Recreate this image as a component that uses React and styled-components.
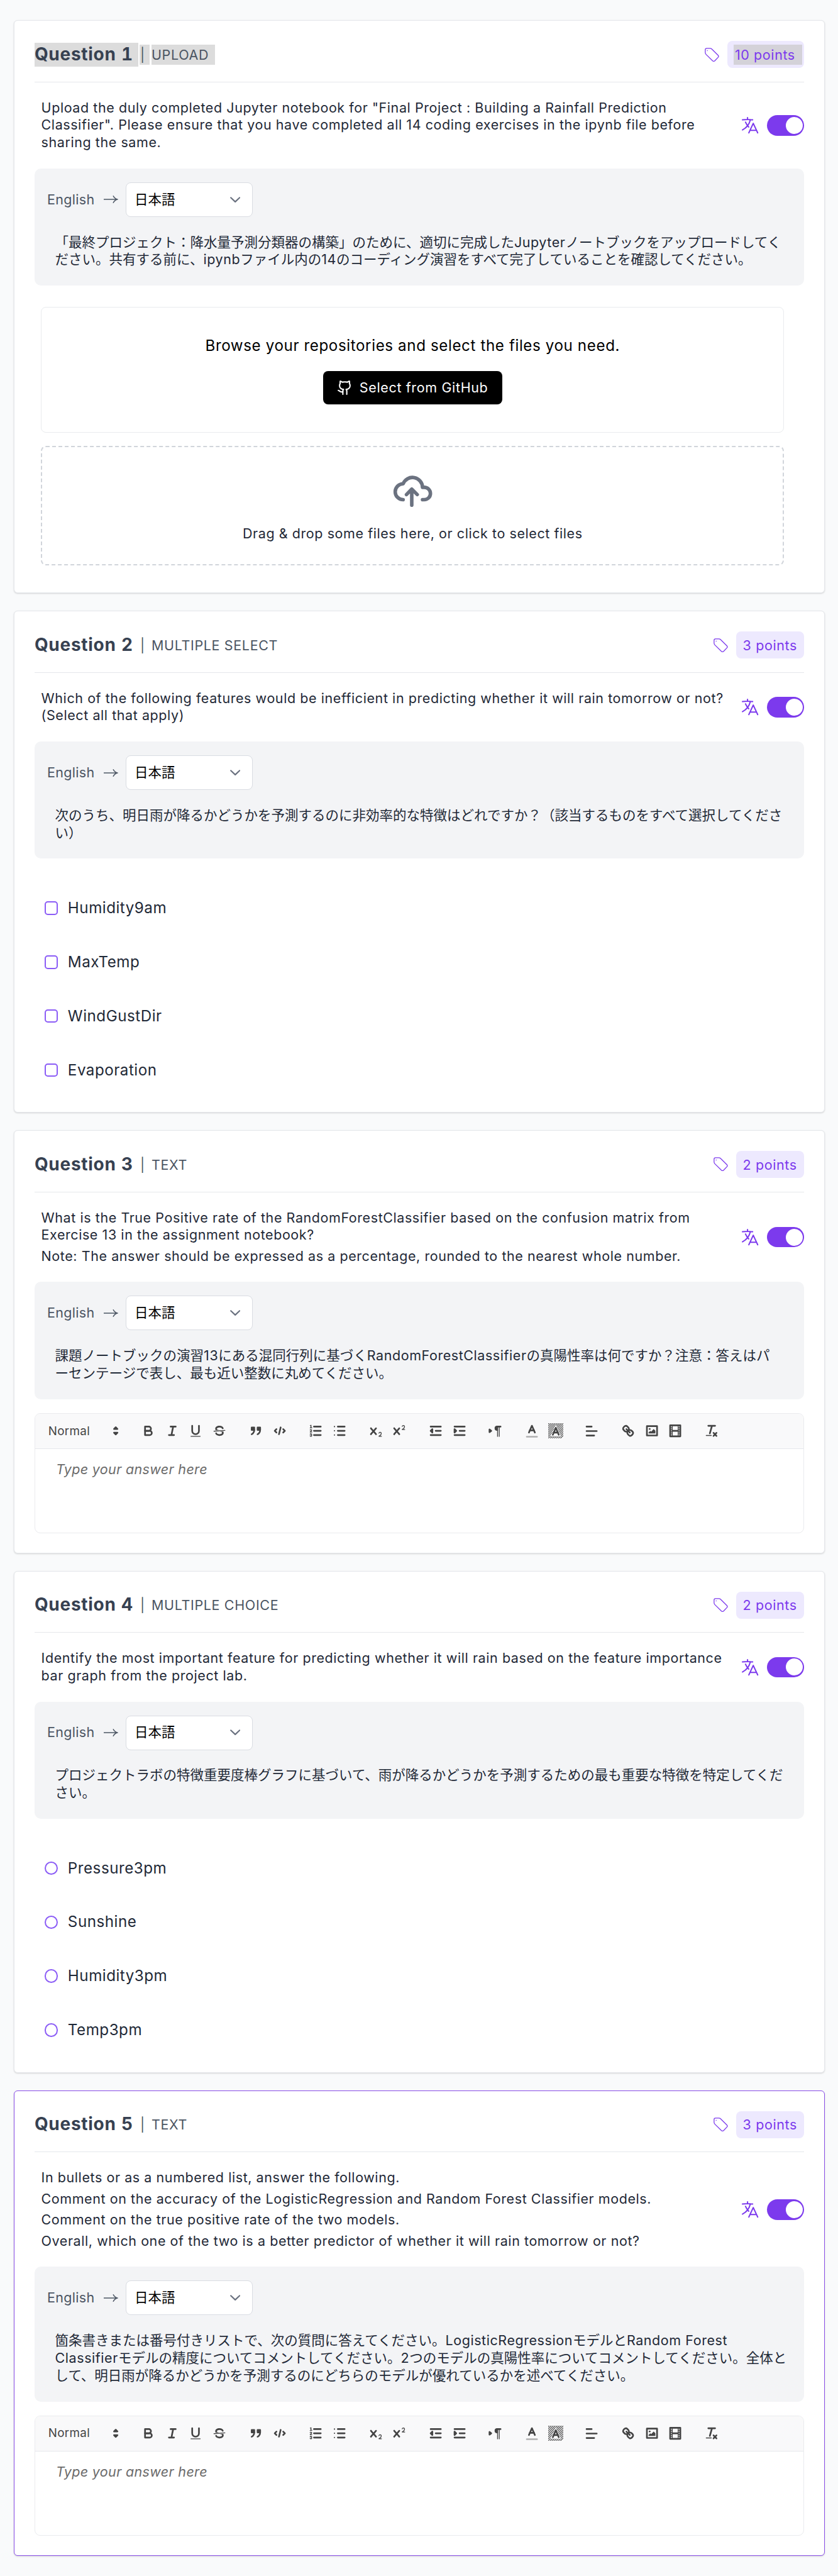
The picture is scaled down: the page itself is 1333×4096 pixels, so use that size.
import React from 'react';
import styled, { createGlobalStyle, css } from 'styled-components';
import { Github } from 'lucide-react';

const GlobalStyle = createGlobalStyle`
  * { box-sizing: border-box; }
  html { background: #f9fafb; }
  body {
    margin: 0;
    background: #f9fafb;
    color: #1f2937;
    font-family: Inter, "Noto Sans CJK JP", sans-serif;
    font-size: 21.5px;
    line-height: 27.7px;
    text-spacing-trim: space-all;
  }
`;

const Page = styled.main`
  width: 1333px;
  min-height: 4096px;
  padding: 32.4px 20.6px 32px 21.9px;
  display: flex;
  flex-direction: column;
  gap: 27.9px;
`;

const Card = styled.section`
  height: ${(p) => p.$height}px;
  padding: 32px 32px 0;
  background: #fff;
  border: 1px solid ${(p) => (p.$active ? '#8b4fe8' : '#e5e7eb')};
  border-radius: 6px;
  box-shadow: 0 1px 3px rgba(0, 0, 0, 0.1), 0 1px 2px rgba(0, 0, 0, 0.06);
`;

const Header = styled.header`
  height: 65.4px;
  padding-bottom: 21.4px;
  border-bottom: 1px solid #e5e7eb;
  display: flex;
  align-items: center;
  justify-content: space-between;
`;

const TitleGroup = styled.div`
  display: flex;
  align-items: center;
`;

const selection = css`
  background: #dcdcdc;
`;

const Title = styled.h2`
  margin: 0 1.6px 0 0;
  width: 165.5px;
  font-size: 28px;
  line-height: 37.6px;
  font-weight: 700;
  letter-spacing: 0.72px;
  font-variant-numeric: tabular-nums;
  color: #374151;
  white-space: nowrap;
  ${(p) => p.$selected && selection}
`;

const Divider = styled.span`
  width: 15.6px;
  margin-right: 3.4px;
  padding-left: 1px;
  line-height: 32.2px;
  color: #4b5563;
  ${(p) => p.$selected && selection}
`;

const Kind = styled.span`
  min-width: ${(p) => (p.$selected ? 100.8 : 0)}px;
  line-height: 32.2px;
  letter-spacing: 0.65px;
  color: #4b5563;
  white-space: nowrap;
  ${(p) => p.$selected && selection}
`;

const PointsGroup = styled.div`
  display: flex;
  align-items: center;
  gap: 12.6px;
`;

const Badge = styled.span`
  width: ${(p) => (p.$selected ? 122.7 : 108.5)}px;
  height: 42.8px;
  padding-left: 10.7px;
  border-radius: 8px;
  background: #ede9fe;
  color: #7c3aed;
  letter-spacing: 0.6px;
  display: flex;
  align-items: center;
  white-space: nowrap;
`;

const BadgeText = styled.span`
  line-height: 32.2px;
  ${(p) => p.$selected && css`
    width: 108.5px;
    padding-left: 1.5px;
    background: #d4d2d9;
  `}
`;

const Prompt = styled.div`
  padding: 27px 0 27px 10.7px;
  display: flex;
  align-items: center;
  justify-content: space-between;
`;

const PromptText = styled.div`
  display: flex;
  flex-direction: column;
  gap: 5.8px;
  letter-spacing: 0.57px;
`;

const Paragraph = styled.p`
  margin: 0;
`;

const Line = styled.span`
  display: block;
  white-space: nowrap;
`;

const TranslateToggle = styled.div`
  display: flex;
  align-items: center;
  gap: 10.7px;
`;

const Switch = styled.span`
  width: 59.2px;
  height: 32.6px;
  padding: 2.8px;
  border-radius: 17px;
  background: #7c3aed;
  display: flex;
  justify-content: flex-end;
`;

const Knob = styled.span`
  width: 27px;
  height: 27px;
  border-radius: 50%;
  background: #fff;
`;

const Panel = styled.div`
  height: ${(p) => 130.8 + p.$lines * 27.8}px;
  padding: 22px 21px 0 20px;
  border-radius: 10px;
  background: #f3f4f6;
`;

const LanguageRow = styled.div`
  display: flex;
  align-items: center;
  color: #4b5563;
`;

const Source = styled.span`
  width: 90.4px;
  letter-spacing: 0.35px;
`;

const Select = styled.div`
  width: 202px;
  height: 55px;
  margin-left: 12.6px;
  padding: 0 19px 0 12.5px;
  border: 1px solid #d9dce2;
  border-radius: 8px;
  background: #fff;
  color: #000;
  display: flex;
  align-items: center;
  justify-content: space-between;
`;

const Translation = styled.div`
  margin: 26.7px 0 0 12.7px;
  line-height: 27.8px;
`;

const Latin = styled.span`
  letter-spacing: 0.56px;
`;

const Uploads = styled.div`
  margin: 33.3px 32px 0 10.3px;
  display: flex;
  flex-direction: column;
  gap: 21.4px;
`;

const RepoBox = styled.div`
  height: 200px;
  padding-top: 43px;
  border: 1px solid #e9ebee;
  border-radius: 8px;
  display: flex;
  flex-direction: column;
  align-items: center;
  color: #000;
`;

const RepoText = styled.p`
  margin: 0 0 22px;
  font-size: 24.2px;
  line-height: 36px;
  letter-spacing: 0.59px;
`;

const GithubButton = styled.button`
  width: 285.4px;
  height: 53.7px;
  padding: 0;
  border: 0;
  border-radius: 8px;
  background: #000;
  color: #fff;
  font: inherit;
  letter-spacing: 0.64px;
  display: flex;
  align-items: center;
  justify-content: center;
  gap: 10.7px;
`;

const DropBox = styled.div`
  height: 190.4px;
  padding-top: 44px;
  border: 2.6px dashed #d1d5db;
  border-radius: 8px;
  display: flex;
  flex-direction: column;
  align-items: center;
  gap: 29px;
  letter-spacing: 0.57px;
`;

const Options = styled.div`
  margin: 35.5px 0 0 16.2px;
`;

const Option = styled.label`
  height: 85.9px;
  display: flex;
  align-items: center;
  gap: 15.4px;
  font-size: 24.2px;
  letter-spacing: 0.5px;
`;

const Mark = styled.span`
  width: 21.4px;
  height: 21.4px;
  border: 2px solid #8b5cf6;
  border-radius: ${(p) => (p.$round ? '50%' : '5px')};
`;

const Editor = styled.div`
  margin-top: 22px;
  height: 191px;
  border: 1px solid #eaebee;
  border-radius: 9px;
  overflow: hidden;
`;

const Toolbar = styled.div`
  height: 56px;
  padding-left: 20.8px;
  border-bottom: 1px solid #e5e7eb;
  background: #f9f9fa;
  display: flex;
  align-items: center;
`;

const Picker = styled.div`
  width: 119.5px;
  margin-right: 21.3px;
  display: flex;
  align-items: center;
  justify-content: space-between;
  font-size: 18.8px;
  letter-spacing: 0.36px;
  color: #444;
`;

const ToolGroup = styled.div`
  display: flex;
  margin-right: 20.1px;
`;

const Tool = styled.span`
  width: 37.65px;
  display: flex;
  justify-content: center;
`;

const Placeholder = styled.p`
  margin: 19.5px 0 0 33px;
  font-style: italic;
  letter-spacing: 0.34px;
  color: #6b6b6b;
`;

const QuillSvg = styled.svg`
  width: 24.2px;
  height: 24.2px;
  fill: none;
  stroke: #444;
  stroke-width: 2;
  stroke-linecap: round;
  stroke-linejoin: round;
  .fill { fill: #444; stroke: none; }
  .both { fill: #444; }
  .thin { stroke-width: 1; }
`;

const CROSS = 'M9.65,5.241a1,1,0,0,0-1.409.108L6,7.964,3.759,5.349A1,1,0,0,0,2.192,6.59178Q2.21541,6.6213,2.241,6.649L4.684,9.5,2.241,12.35A1,1,0,0,0,3.71,13.70722q0.02557-.02768.049-0.05722L6,11.036,8.241,13.65a1,1,0,1,0,1.567-1.24277Q9.78459,12.3777,9.759,12.35L7.316,9.5,9.759,6.651A1,1,0,0,0,9.65,5.241Z';

const HATCH = [-16.8, -14.4, -12, -9.6, -7.2, -4.8, -2.4, 0, 2.4, 4.8, 7.2, 9.6, 12, 14.4];

const toolIcons = {
  bold: (
    <>
      <path d="M5,4H9.5A2.5,2.5,0,0,1,12,6.5v0A2.5,2.5,0,0,1,9.5,9H5V4Z" />
      <path d="M5,9h5.5A2.5,2.5,0,0,1,13,11.5v0A2.5,2.5,0,0,1,10.5,14H5V9Z" />
    </>
  ),
  italic: <path d="M7 4h6M5 14h6M8 14l2-10" />,
  underline: (
    <>
      <path d="M5,3V9a4.012,4.012,0,0,0,4,4H9a4.012,4.012,0,0,0,4-4V3" />
      <rect className="fill" height="1" rx="0.5" width="12" x="3" y="15" />
    </>
  ),
  strike: (
    <>
      <path className="thin" d="M15.5 8.5l-13 1" />
      <path className="fill" d="M9.007,8C6.542,7.791,6,7.519,6,6.5,6,5.792,7.283,5,9,5c1.571,0,2.765.679,2.969,1.309a1,1,0,0,0,1.9-.617C13.356,4.106,11.354,3,9,3,6.2,3,4,4.538,4,6.5a3.2,3.2,0,0,0,.5,1.843Z" />
      <path className="fill" d="M8.984,10C11.457,10.208,12,10.479,12,11.5c0,0.708-1.283,1.5-3,1.5-1.571,0-2.765-.679-2.969-1.309a1,1,0,1,0-1.9.617C4.644,13.894,6.646,15,9,15c2.8,0,5-1.538,5-3.5a3.2,3.2,0,0,0-.5-1.843Z" />
    </>
  ),
  quote: (
    <>
      <rect className="both" height="3" width="3" x="4" y="5" />
      <rect className="both" height="3" width="3" x="11" y="5" />
      <path className="both" d="M7,8c0,4.031-3,5-3,5" />
      <path className="both" d="M14,8c0,4.031-3,5-3,5" />
    </>
  ),
  code: <path d="M5 7L3 9l2 2M13 7l2 2-2 2M10 5L8 13" />,
  ordered: (
    <>
      <path d="M7 4h8M7 9h8M7 14h8" />
      <path className="thin" d="M2.5 5.5h2" />
      <path className="fill" d="M3.5,6A0.5,0.5,0,0,1,3,5.5V3.085l-0.276.138A0.5,0.5,0,0,1,2.053,3c-0.124-.247-0.023-0.324.224-0.447l1-.5A0.5,0.5,0,0,1,4,2.5v3A0.5,0.5,0,0,1,3.5,6Z" />
      <path className="thin" d="M4.5,10.5h-2c0-.234,1.85-1.076,1.85-2.234A0.959,0.959,0,0,0,2.5,8.156" />
      <path className="thin" d="M2.5,14.846a0.959,0.959,0,0,0,1.85-.109A0.7,0.7,0,0,0,3.75,14a0.688,0.688,0,0,0,.6-0.736,0.959,0.959,0,0,0-1.85-.109" />
    </>
  ),
  bullet: (
    <>
      <path d="M7 4h8M7 9h8M7 14h8" />
      <path d="M3 4h.01M3 9h.01M3 14h.01" strokeWidth="1.5" />
    </>
  ),
  sub: (
    <>
      <path className="fill" d="M15.5,15H13.861a3.858,3.858,0,0,0,1.914-2.975,1.8,1.8,0,0,0-1.6-1.751A1.921,1.921,0,0,0,12.021,11.7a0.50013,0.50013,0,1,0,.957.291h0a0.914,0.914,0,0,1,1.053-.725,0.81,0.81,0,0,1,.744.762c0,1.076-1.16971,1.86982-1.93971,2.43082A1.45639,1.45639,0,0,0,12,15.5a0.5,0.5,0,0,0,.5.5h3A0.5,0.5,0,0,0,15.5,15Z" />
      <path className="fill" d={CROSS} />
    </>
  ),
  sup: (
    <>
      <path className="fill" d="M15.5,7H13.861a4.015,4.015,0,0,0,1.914-2.975,1.8,1.8,0,0,0-1.6-1.751A1.922,1.922,0,0,0,12.021,3.7a0.5,0.5,0,1,0,.957.291,0.917,0.917,0,0,1,1.053-.725,0.81,0.81,0,0,1,.744.762c0,1.077-1.164,1.925-1.934,2.486A1.423,1.423,0,0,0,12,7.5a0.5,0.5,0,0,0,.5.5h3A0.5,0.5,0,0,0,15.5,7Z" />
      <path className="fill" d={CROSS} />
    </>
  ),
  outdent: (
    <>
      <path d="M3 14h12M3 4h12M9 9h6" />
      <path className="both" d="M5 7v4L3 9z" />
    </>
  ),
  indent: (
    <>
      <path d="M3 14h12M3 4h12M9 9h6" />
      <path className="both" d="M3 7v4l2-2z" />
    </>
  ),
  direction: (
    <>
      <path className="both" d="M2 7.4v3.2L4 9z" />
      <path d="M15 4h-4" />
      <path className="fill" d="M11,3a3,3,0,0,0,0,6h1V3H11Z" />
      <rect className="fill" height="12" width="1" x="11" y="4" />
      <rect className="fill" height="12" width="1" x="13" y="4" />
    </>
  ),
  color: (
    <>
      <path d="M3 16h12" opacity="0.4" />
      <path d="M5.5 11L9 3l3.5 8M11.63 8.4H6.38" />
    </>
  ),
  background: (
    <>
      <defs>
        <clipPath id="hatch-area">
          <path clipRule="evenodd" d="M0 0h18v18H0zM9 1.6L2.8 15.4h12.4z" />
        </clipPath>
      </defs>
      <g clipPath="url(#hatch-area)" strokeWidth="0.8">
        {HATCH.map((x) => (
          <path key={x} d={`M${x} 18L${x + 18} 0`} />
        ))}
      </g>
      <path d="M5.5 13.6L9 5.4l3.5 8.2M11.63 11H6.38" />
    </>
  ),
  align: <path d="M3 9.3h12M3 14.6h9M3 4h6" />,
  link: (
    <>
      <path d="M7 7l4 4" />
      <path d="M8.9,4.577a3.476,3.476,0,0,1,.36,4.679A3.476,3.476,0,0,1,4.577,8.9C3.185,7.5,2.035,6.4,4.217,4.217S7.5,3.185,8.9,4.577Z" />
      <path d="M13.423,9.1a3.476,3.476,0,0,0-4.679-.36,3.476,3.476,0,0,0,.36,4.679c1.392,1.392,2.5,2.542,4.679.36S14.815,10.5,13.423,9.1Z" />
    </>
  ),
  image: (
    <>
      <rect height="11" width="12" x="3" y="3.5" />
      <circle className="fill" cx="6.3" cy="6.8" r="1" />
      <path className="fill" d="M5 12v-1l2-2 1 1 3-3.2 2 2.2v3z" />
    </>
  ),
  video: (
    <>
      <rect height="13" width="12" x="3" y="2.5" />
      <path className="thin" d="M5.5 3v12M12.5 3v12" />
      <path d="M6 9h6" />
      <path className="thin" d="M3.5 5.5h2M3.5 7.8h2M3.5 10.2h2M3.5 12.5h2M12.5 5.5h2M12.5 7.8h2M12.5 10.2h2M12.5 12.5h2" />
    </>
  ),
  clean: (
    <>
      <path d="M5 3h8M6.8 12L9.35 3M11.2 11.4l3.4 3.6M14.6 11.4L11.2 15" />
      <rect className="fill" height="1" rx="0.5" width="7" x="2" y="14" />
    </>
  ),
};

const TOOL_GROUPS = [
  ['bold', 'italic', 'underline', 'strike'],
  ['quote', 'code'],
  ['ordered', 'bullet'],
  ['sub', 'sup'],
  ['outdent', 'indent'],
  ['direction'],
  ['color', 'background'],
  ['align'],
  ['link', 'image', 'video'],
  ['clean'],
];

const TagIcon = () => (
  <svg width="23" height="22.4" viewBox="61 88 82 80" fill="none" stroke="#7c3aed" strokeWidth="4.6">
    <path d="M72 91H91Q97 91 101 95L137 131Q142 137 137 142L118 162Q112 167 106 162L68 125Q64 121 64 115V99Q64 91 72 91Z" />
    <circle cx="76" cy="104" r="2.6" fill="#7c3aed" stroke="none" />
  </svg>
);

const TranslateIcon = () => (
  <svg width="32.3" height="32.3" viewBox="0 0 24 24" fill="none" stroke="#7c3aed" strokeWidth="1.5" strokeLinecap="round" strokeLinejoin="round">
    <path d="m10.5 21 5.25-11.25L21 21m-9-3h7.5M3 5.621a48.474 48.474 0 0 1 6-.371m0 0c1.12 0 2.233.038 3.334.114M9 5.25V3m3.334 2.364C11.176 10.658 7.69 15.08 3 17.502m9.334-12.138c.896.061 1.785.147 2.666.257m-4.589 8.495a18.023 18.023 0 0 1-3.827-5.802" />
  </svg>
);

const CloudIcon = () => (
  <svg width="62.8" height="51" viewBox="44 56 224 182" fill="none" stroke="#6b7280" strokeWidth="20" strokeLinecap="round" strokeLinejoin="round">
    <path d="M102 197a45 45 0 1 1 0-90A57 57 0 0 1 212 127h10a35 35 0 0 1 0 70h-10" />
    <path d="M151 228v-90M121 168l30-31 31 31" />
  </svg>
);

const ArrowIcon = () => (
  <svg width="22.5" height="16" viewBox="0 0 22.5 16" fill="none" stroke="#4b5563" strokeWidth="1.5">
    <path d="M0 8h21M15 2.2Q17 6.5 21.6 8Q17 9.5 15 13.8" />
  </svg>
);

const ChevronIcon = () => (
  <svg width="16.4" height="9.4" viewBox="0 0 16.4 9.4" fill="none" stroke="#6b7280" strokeWidth="2.2" strokeLinecap="round" strokeLinejoin="round">
    <path d="M1.2 1.3l7 6.6 7-6.6" />
  </svg>
);

function MixedLine({ text }) {
  return (
    <Line>
      {text.split(/([A-Za-z0-9][A-Za-z0-9 ]*)/).map((part, i) =>
        i % 2 ? <Latin key={i}>{part}</Latin> : part
      )}
    </Line>
  );
}

function TextEditor() {
  return (
    <Editor>
      <Toolbar>
        <Picker>
          Normal
          <QuillSvg viewBox="0 0 18 18">
            <path className="both" d="M7 11.2l2 2 2-2zM7 6.8l2-2 2 2z" />
          </QuillSvg>
        </Picker>
        {TOOL_GROUPS.map((group) => (
          <ToolGroup key={group[0]}>
            {group.map((name) => (
              <Tool key={name}>
                <QuillSvg viewBox="0 0 18 18">{toolIcons[name]}</QuillSvg>
              </Tool>
            ))}
          </ToolGroup>
        ))}
      </Toolbar>
      <Placeholder>Type your answer here</Placeholder>
    </Editor>
  );
}

function UploadAnswer() {
  return (
    <Uploads>
      <RepoBox>
        <RepoText>Browse your repositories and select the files you need.</RepoText>
        <GithubButton type="button">
          <Github size={25} />
          Select from GitHub
        </GithubButton>
      </RepoBox>
      <DropBox>
        <CloudIcon />
        <span>Drag &amp; drop some files here, or click to select files</span>
      </DropBox>
    </Uploads>
  );
}

function OptionList({ items, round }) {
  return (
    <Options>
      {items.map((item) => (
        <Option key={item}>
          <Mark $round={round} />
          {item}
        </Option>
      ))}
    </Options>
  );
}

function Question({ number, kind, points, prompt, translation, height, selected, active, children }) {
  return (
    <Card $height={height} $active={active}>
      <Header>
        <TitleGroup>
          <Title $selected={selected}>Question {number}</Title>
          <Divider $selected={selected}>|</Divider>
          <Kind $selected={selected}>{kind}</Kind>
        </TitleGroup>
        <PointsGroup>
          <TagIcon />
          <Badge $selected={selected}>
            <BadgeText $selected={selected}>{points} points</BadgeText>
          </Badge>
        </PointsGroup>
      </Header>
      <Prompt>
        <PromptText>
          {prompt.map((lines) => (
            <Paragraph key={lines[0]}>
              {lines.map((line) => (
                <Line key={line}>{line}</Line>
              ))}
            </Paragraph>
          ))}
        </PromptText>
        <TranslateToggle>
          <TranslateIcon />
          <Switch>
            <Knob />
          </Switch>
        </TranslateToggle>
      </Prompt>
      <Panel $lines={translation.length}>
        <LanguageRow>
          <Source>English</Source>
          <ArrowIcon />
          <Select>
            日本語
            <ChevronIcon />
          </Select>
        </LanguageRow>
        <Translation>
          {translation.map((line) => (
            <MixedLine key={line} text={line} />
          ))}
        </Translation>
      </Panel>
      {children}
    </Card>
  );
}

export default function App() {
  return (
    <>
      <GlobalStyle />
      <Page>
        <Question
          number={1}
          kind="UPLOAD"
          points={10}
          height={911}
          selected
          prompt={[[
            'Upload the duly completed Jupyter notebook for "Final Project : Building a Rainfall Prediction',
            'Classifier". Please ensure that you have completed all 14 coding exercises in the ipynb file before',
            'sharing the same.',
          ]]}
          translation={[
            '「最終プロジェクト：降水量予測分類器の構築」のために、適切に完成したJupyterノートブックをアップロードしてく',
            'ださい。共有する前に、ipynbファイル内の14のコーディング演習をすべて完了していることを確認してください。',
          ]}
        >
          <UploadAnswer />
        </Question>
        <Question
          number={2}
          kind="MULTIPLE SELECT"
          points={3}
          height={798}
          prompt={[[
            'Which of the following features would be inefficient in predicting whether it will rain tomorrow or not?',
            '(Select all that apply)',
          ]]}
          translation={[
            '次のうち、明日雨が降るかどうかを予測するのに非効率的な特徴はどれですか？（該当するものをすべて選択してくださ',
            'い）',
          ]}
        >
          <OptionList items={['Humidity9am', 'MaxTemp', 'WindGustDir', 'Evaporation']} />
        </Question>
        <Question
          number={3}
          kind="TEXT"
          points={2}
          height={672.7}
          prompt={[
            [
              'What is the True Positive rate of the RandomForestClassifier based on the confusion matrix from',
              'Exercise 13 in the assignment notebook?',
            ],
            ['Note: The answer should be expressed as a percentage, rounded to the nearest whole number.'],
          ]}
          translation={[
            '課題ノートブックの演習13にある混同行列に基づくRandomForestClassifierの真陽性率は何ですか？注意：答えはパ',
            'ーセンテージで表し、最も近い整数に丸めてください。',
          ]}
        >
          <TextEditor />
        </Question>
        <Question
          number={4}
          kind="MULTIPLE CHOICE"
          points={2}
          height={798.1}
          prompt={[[
            'Identify the most important feature for predicting whether it will rain based on the feature importance',
            'bar graph from the project lab.',
          ]]}
          translation={[
            'プロジェクトラボの特徴重要度棒グラフに基づいて、雨が降るかどうかを予測するための最も重要な特徴を特定してくだ',
            'さい。',
          ]}
        >
          <OptionList round items={['Pressure3pm', 'Sunshine', 'Humidity3pm', 'Temp3pm']} />
        </Question>
        <Question
          number={5}
          kind="TEXT"
          points={3}
          height={740.3}
          active
          prompt={[
            ['In bullets or as a numbered list, answer the following.'],
            ['Comment on the accuracy of the LogisticRegression and Random Forest Classifier models.'],
            ['Comment on the true positive rate of the two models.'],
            ['Overall, which one of the two is a better predictor of whether it will rain tomorrow or not?'],
          ]}
          translation={[
            '箇条書きまたは番号付きリストで、次の質問に答えてください。LogisticRegressionモデルとRandom Forest',
            'Classifierモデルの精度についてコメントしてください。2つのモデルの真陽性率についてコメントしてください。全体と',
            'して、明日雨が降るかどうかを予測するのにどちらのモデルが優れているかを述べてください。',
          ]}
        >
          <TextEditor />
        </Question>
      </Page>
    </>
  );
}
